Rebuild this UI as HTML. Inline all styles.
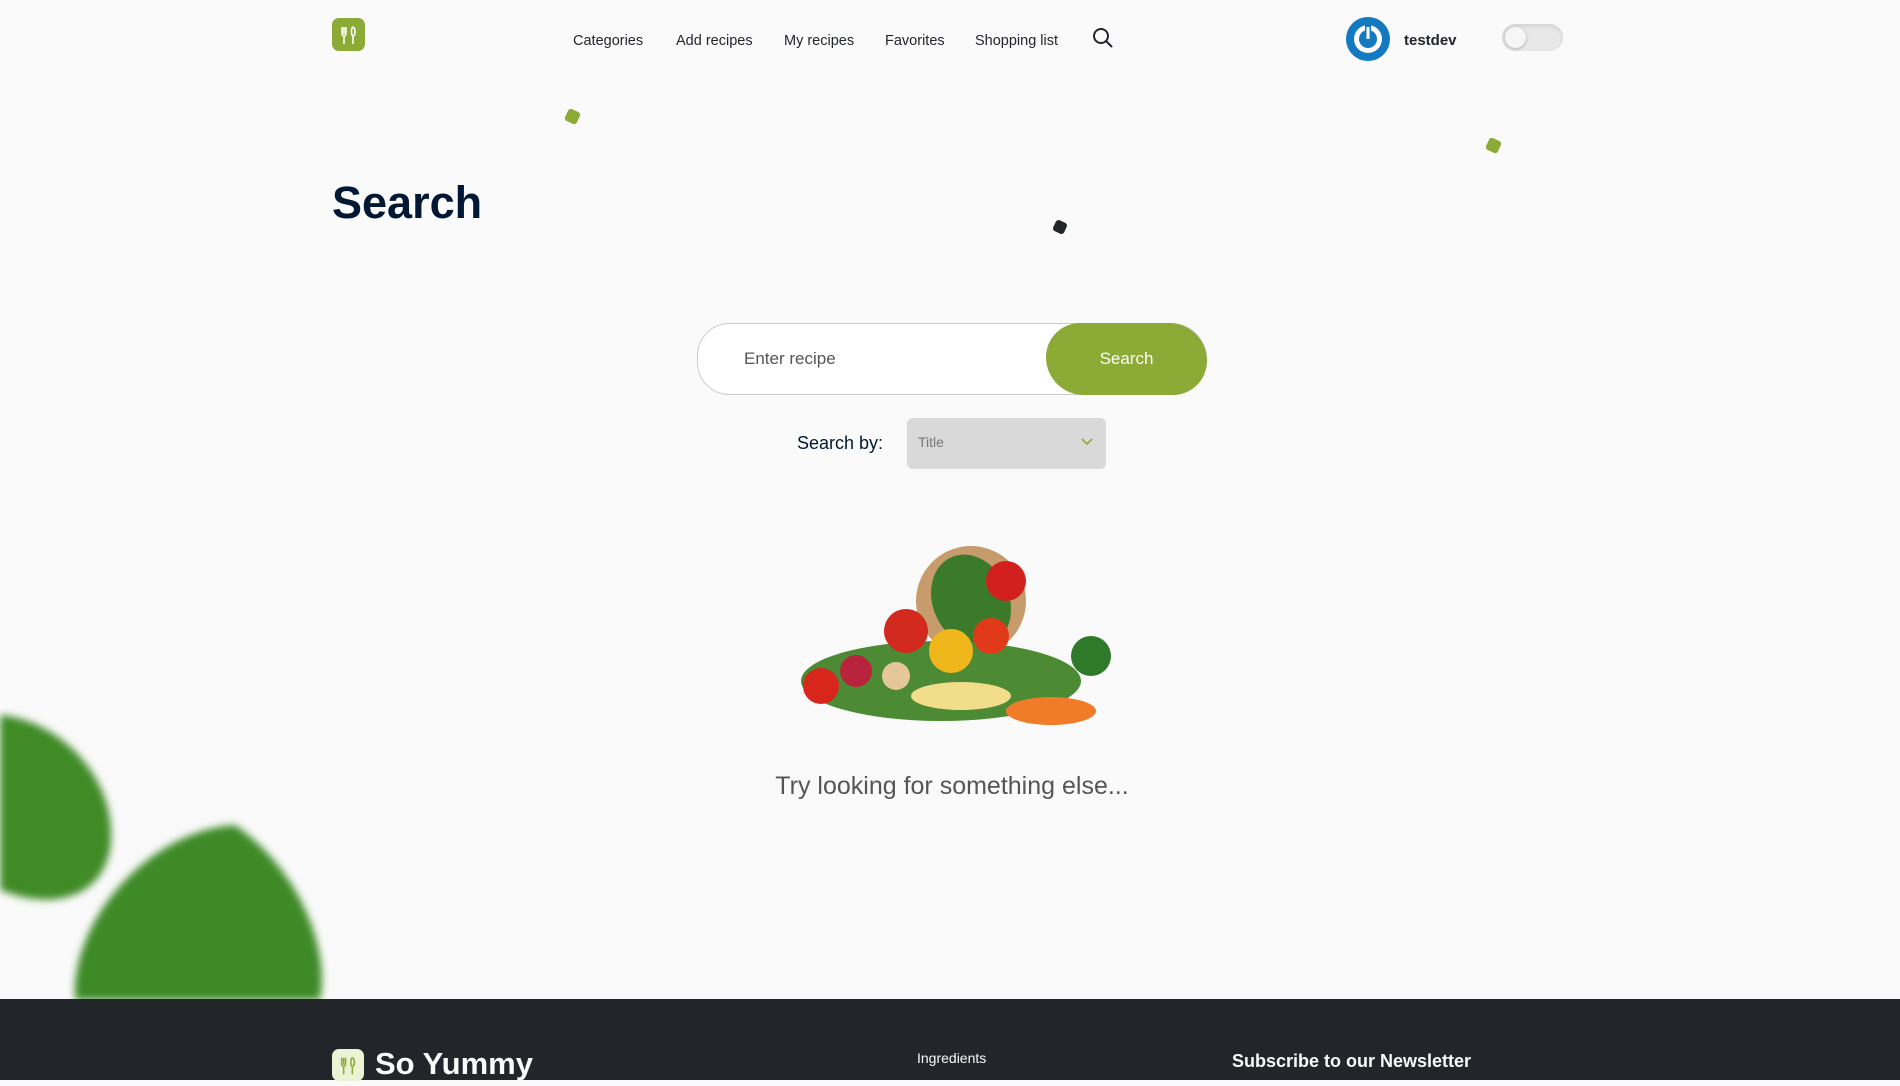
<!DOCTYPE html>
<html><head><meta charset="utf-8"><style>
*{margin:0;padding:0;box-sizing:border-box}
body{width:1900px;height:1080px;overflow:hidden;background:#fafafa;font-family:"Liberation Sans",sans-serif;position:relative;color:#22252a}
.abs{position:absolute}
.logo{width:33px;height:33px;background:#8baa36;border-radius:7px}
.nav a{position:absolute;top:33px;font-size:14.5px;color:#23262a;text-decoration:none}
.dia{position:absolute;width:13px;height:13px;border-radius:3px;transform:rotate(25deg)}
</style></head><body>
<div class="abs logo" style="left:332px;top:18px"><svg width="33" height="33" viewBox="0 0 33 33" fill="none" stroke="#fff" stroke-width="1.6"><path d="M10 9v6c0 2 1 3 2 3M14 9v6c0 2-1 3-2 3v8M12 9v7"/><path d="M21 9c-2 1-2 8 0 9v8M21 9c2 1 3 5 1 9"/></svg></div>
<div class="nav">
<a style="left:573px">Categories</a><a style="left:676px">Add recipes</a><a style="left:784px">My recipes</a><a style="left:885px">Favorites</a><a style="left:975px">Shopping list</a>
</div>
<svg class="abs" style="left:1092px;top:27px" width="22" height="22" viewBox="0 0 22 22" fill="none" stroke="#22252a" stroke-width="2"><circle cx="9" cy="9" r="7"/><path d="M14 14l6 6"/></svg>
<svg class="abs" style="left:1346px;top:17px" width="44" height="44" viewBox="0 0 44 44"><circle cx="22" cy="22" r="22" fill="#1379c1"/><circle cx="22" cy="22" r="14" fill="#fff"/><circle cx="22" cy="22" r="9" fill="#1379c1"/><rect x="19" y="8" width="6" height="15" fill="#1379c1"/><rect x="20.5" y="10" width="3" height="12" fill="#fff"/></svg>
<div class="abs" style="left:1404px;top:32px;font-size:15px;font-weight:bold">testdev</div>
<div class="abs" style="left:1502px;top:24px;width:61px;height:27px;border-radius:14px;background:#e8e8e8;box-shadow:inset 0 2px 4px rgba(0,0,0,.1)"><div style="position:absolute;left:3px;top:3px;width:21px;height:21px;border-radius:50%;background:#f6f6f6;box-shadow:0 1px 3px rgba(0,0,0,.25)"></div></div>
<div class="dia" style="left:566px;top:110px;background:#8baa36"></div>
<div class="dia" style="left:1487px;top:139px;background:#8baa36"></div>
<div class="dia" style="left:1054px;top:221px;background:#22252a;width:12px;height:12px"></div>
<div class="abs" style="left:332px;top:177px;font-size:45px;font-weight:bold;color:#001833">Search</div>
<div class="abs" style="left:697px;top:323px;width:510px;height:72px;border:1px solid #ccc;border-radius:36px 40px 40px 36px;background:#fff"></div>
<div class="abs" style="left:744px;top:349px;font-size:17px;color:#555">Enter recipe</div>
<div class="abs" style="left:1046px;top:323px;width:161px;height:72px;border-radius:36px 40px 36px 40px;background:#8baa36;color:#fff;font-size:17px;text-align:center;line-height:72px">Search</div>
<div class="abs" style="left:797px;top:433px;font-size:18px;color:#001833">Search by:</div>
<div class="abs" style="left:907px;top:418px;width:199px;height:51px;border-radius:6px;background:#d9d9d9;font-size:14px;color:#777;padding:16px 11px">Title</div>
<svg class="abs" style="left:1081px;top:438px" width="12" height="8" viewBox="0 0 12 8" fill="none" stroke="#8baa36" stroke-width="1.6"><path d="M1 1l5 5 5-5"/></svg>
<svg class="abs" style="left:781px;top:521px" width="341" height="218" viewBox="0 0 341 218">
<ellipse cx="190" cy="80" rx="55" ry="55" fill="#c69c6d" transform="rotate(-25 190 80)"/>
<ellipse cx="190" cy="80" rx="38" ry="48" fill="#3b7a2a" transform="rotate(-25 190 80)"/>
<ellipse cx="160" cy="160" rx="140" ry="40" fill="#4d8a34"/>
<circle cx="40" cy="165" r="18" fill="#d8261c"/><circle cx="75" cy="150" r="16" fill="#b8243c"/>
<circle cx="125" cy="110" r="22" fill="#d22a1e"/><circle cx="170" cy="130" r="22" fill="#f0b71c"/>
<circle cx="210" cy="115" r="18" fill="#e03a1a"/><circle cx="225" cy="60" r="20" fill="#d2201e"/>
<circle cx="310" cy="135" r="20" fill="#2f7a2a"/><ellipse cx="180" cy="175" rx="50" ry="14" fill="#f2dd8a"/>
<ellipse cx="270" cy="190" rx="45" ry="14" fill="#f07c2a"/><circle cx="115" cy="155" r="14" fill="#e6c79a"/>
</svg>
<div class="abs" style="left:0;width:1904px;top:772px;text-align:center;font-size:25px;color:#555">Try looking for something else...</div>
<svg class="abs" style="left:0;top:700px" width="330" height="300" viewBox="0 0 330 300"><defs><filter id="b"><feGaussianBlur stdDeviation="4"/></filter></defs>
<path d="M0 15C60 20 120 80 110 150C100 200 50 210 0 190Z" fill="#3f8b28" filter="url(#b)"/>
<path d="M75 300C70 220 150 130 235 125C300 170 330 250 320 300Z" fill="#3d8a26" filter="url(#b)"/></svg>
<div class="abs" style="left:0;top:999px;width:1900px;height:81px;background:#22252a"></div>
<div class="abs" style="left:332px;top:1049px;width:32px;height:32px;border-radius:7px;background:#ebf3d4"><svg width="32" height="32" viewBox="0 0 33 33" fill="none" stroke="#8baa36" stroke-width="1.6"><path d="M10 9v6c0 2 1 3 2 3M14 9v6c0 2-1 3-2 3v8M12 9v7"/><path d="M21 9c-2 1-2 8 0 9v8M21 9c2 1 3 5 1 9"/></svg></div>
<div class="abs" style="left:375px;top:1046px;font-size:31px;font-weight:bold;color:#fafafa">So Yummy</div>
<div class="abs" style="left:917px;top:1050px;font-size:14px;color:#fafafa">Ingredients</div>
<div class="abs" style="left:1232px;top:1051px;font-size:18px;font-weight:bold;color:#fafafa">Subscribe to our Newsletter</div>
</body></html>
